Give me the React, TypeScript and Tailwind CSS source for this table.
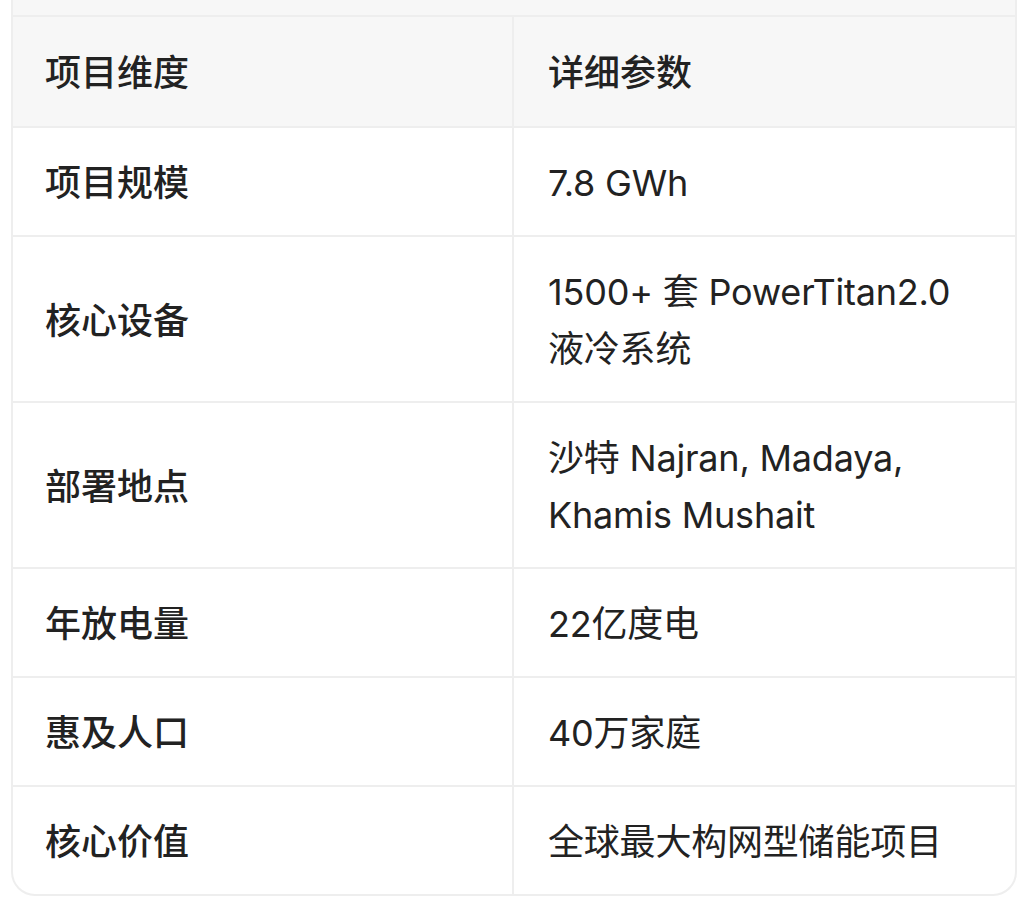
import React from 'react';

const rows: { label: string; value: string }[] = [
  { label: '项目规模', value: '7.8 GWh' },
  { label: '核心设备', value: '1500+ 套 PowerTitan2.0 液冷系统' },
  { label: '部署地点', value: '沙特 Najran, Madaya, Khamis Mushait' },
  { label: '年放电量', value: '22亿度电' },
  { label: '惠及人口', value: '40万家庭' },
  { label: '核心价值', value: '全球最大构网型储能项目' },
];

export default function App() {
  return (
    <div
      className="min-h-[901px] bg-white text-[#222222]"
      style={{ fontFamily: 'Inter, "Noto Sans CJK SC", sans-serif' }}
    >
      <div className="ml-[11px] w-[1006px] overflow-hidden rounded-b-[24px] border-x-2 border-b-2 border-[#eeeeee]">
        <div className="h-[17px] border-b-2 border-[#eeeeee] bg-[#f7f7f7]" />
        <div className="grid grid-cols-2 bg-[#f7f7f7] text-[36px] leading-[57px]">
          <div className="border-r-2 border-[#eeeeee] px-8 pt-[28px] pb-[24px] font-medium">
            项目维度
          </div>
          <div className="pt-[28px] pb-[24px] pl-[34px] pr-8 font-medium">
            详细参数
          </div>
        </div>
        {rows.map((row) => (
          <div
            key={row.label}
            className="grid grid-cols-2 border-t-2 border-[#eeeeee] text-[36px] leading-[57px]"
          >
            <div className="flex items-center border-r-2 border-[#eeeeee] px-8 pt-[27px] pb-[23px] font-medium">
              {row.label}
            </div>
            <div className="pt-[27px] pb-[23px] pl-[34px] pr-8 tracking-[-0.2px]">
              {row.value}
            </div>
          </div>
        ))}
      </div>
    </div>
  );
}
